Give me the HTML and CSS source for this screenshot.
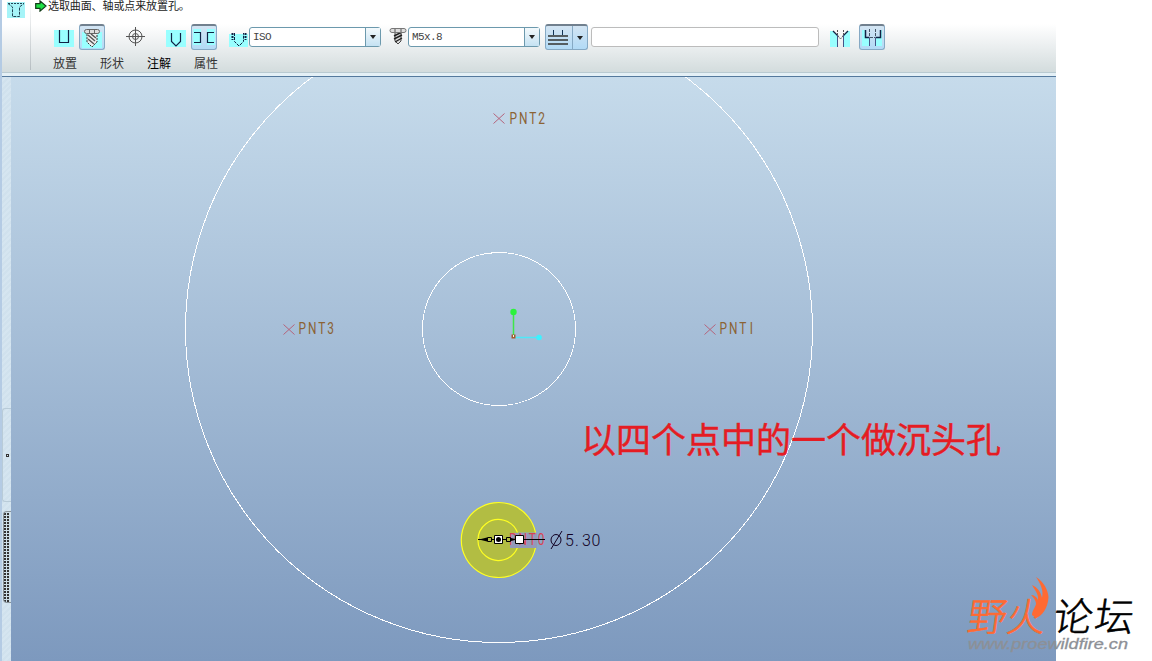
FILE: index.html
```
<!DOCTYPE html>
<html lang="zh-CN">
<head>
  <meta charset="UTF-8" />
  <meta name="viewport" content="width=device-width, initial-scale=1.0"/>
  <title>孔</title>
  <link rel="stylesheet" href="styles.css">
</head>
<body>

  <div class="app">
    <div class="toolbar">
      <div class="feature">
        <svg width="18" height="16" viewBox="0 0 18 16">
          <rect width="18" height="16" fill="#a6f4f8"/>
          <path d="M1 1.5H17" stroke="#245" stroke-dasharray="2 1"/>
          <path d="M1 1.5L5.500 5V14.500H12.500V5L17 1.500" fill="none" stroke="#245" stroke-dasharray="3 1"/>
        </svg>
      </div>
      <div class="main">
        <div class="message">
          <svg width="12" height="12" viewBox="0 0 12 12"><path d="M.7 3.700H5V.9L11 6L5 11.100V8.300H.7Z" fill="#1fe045" stroke="#123c18" stroke-width="1.200"/></svg>
          <span>选取曲面、轴或点来放置孔。</span>
        </div>
        <div class="tools">
          <svg class="icon simple" width="20" height="17" viewBox="0 0 20 17">
            <rect width="20" height="17" fill="#9ff"/>
            <path d="M5.500 0V12.500H14.500V0" fill="none" stroke="#124" stroke-width="1.200"/>
          </svg>
          <button class="pressed standard">
            <svg width="20" height="20" viewBox="0 0 20 20">
              <path d="M0 4H20V20H0Z" fill="#9ff"/>
              <path d="M5 5H15V14L10 19L5 14Z" fill="#eee" stroke="#333" stroke-dasharray="2 1"/>
              <path d="M6 7L13 13M6 11L12 16M9 6L14 10" stroke="#555" stroke-width="1.500"/>
              <rect x="2.500" y="1.500" width="15" height="4" rx="2" fill="#ddd" stroke="#666"/>
              <path d="M7.500 2V5M12.500 2V5" stroke="#666"/>
            </svg>
          </button>
          <svg class="icon target" width="20" height="20" viewBox="0 0 20 20" fill="none" stroke="#555">
            <circle cx="9.500" cy="9.500" r="6.500"/>
            <circle cx="9.500" cy="9.500" r="3"/>
            <path d="M0 9.500H19M9.500 0V19"/>
          </svg>
          <svg class="icon drill" width="20" height="17" viewBox="0 0 20 17">
            <rect width="20" height="17" fill="#9ff"/>
            <path d="M5.500 3V11.500L10 16L14.500 11.500V3" fill="none" stroke="#124" stroke-width="1.200"/>
          </svg>
          <button class="pressed clearance">
            <svg width="22" height="18" viewBox="0 0 22 18">
              <path d="M0 0H8V16H0ZM14 0H22V16H14Z" fill="#9ff"/>
              <path d="M1 3.500H7.500V13.500H1M21 3.500H14.500V13.500H21" fill="none" stroke="#124" stroke-width="1.200"/>
            </svg>
          </button>
          <svg class="icon thread" width="20" height="17" viewBox="0 0 20 17">
            <rect y="4" width="19" height="13" fill="#9ff"/>
            <path d="M5.500 3V11.500L10 16L14.500 11.500V3" fill="none" stroke="#124" stroke-dasharray="3 1"/>
            <path d="M3.500 3V10M16.500 3V10" stroke="#124" stroke-width="2" stroke-dasharray="2 1"/>
          </svg>
          <div class="combo"><span>ISO</span><i></i></div>
          <svg class="icon bolt" width="18" height="17" viewBox="0 0 18 17">
            <path d="M6 4H12V13L9 16L6 13Z" fill="#ddd" stroke="#444"/>
            <path d="M5 8L13 4M5 11L13 7M6 14L13 10" stroke="#222" stroke-width="1.400"/>
            <rect x="1" y=".5" width="16" height="4" rx="2" fill="#ddd" stroke="#777"/>
            <path d="M6 1V4M12 1V4" stroke="#555"/>
          </svg>
          <div class="combo size"><span>M5x.8</span><i></i></div>
          <button class="pressed split">
            <svg width="26" height="23" viewBox="0 0 26 23">
              <path d="M7.500 4V10M16.500 4V10" stroke="#135"/>
              <path d="M2 10H22M2 14H22M2 18H22" stroke="#555e62" stroke-width="2"/>
            </svg>
            <i></i>
          </button>
          <div class="depth"></div>
          <svg class="icon sink" width="20" height="17" viewBox="0 0 20 17">
            <path d="M0 1H3L8 6V17H0ZM20 1H17L13 6V17H20Z" fill="#9ff"/>
            <path d="M3 1L8 6M18 1L13 6" stroke="#124" stroke-width="1.300"/>
            <path d="M7.500 5V17M13.500 5V17" stroke="#458"/>
            <path d="M7.500 0V5M13.500 0V5M8 6L10.500 9L13 6" fill="none" stroke="#555" stroke-dasharray="2 1"/>
          </svg>
          <button class="pressed bore">
            <svg width="20" height="17" viewBox="0 0 20 17">
              <path d="M0 1H4V8H7V17H0ZM20 1H18V8H14V17H20Z" fill="#9ff"/>
              <path d="M3.500 1V8.500H7.500M18.500 1V8.500H13.500" fill="none" stroke="#124" stroke-width="1.500"/>
              <path d="M7.500 9V17M13.500 9V17" stroke="#458"/>
              <path d="M7.500 0V8M13.500 0V8M8 8.500H13" stroke="#456" stroke-dasharray="3 1"/>
            </svg>
          </button>
        </div>
        <div class="tabs">
          <span>放置</span>
          <span>形状</span>
          <span class="changed">注解</span>
          <span>属性</span>
        </div>
      </div>
    </div>

    <div class="work">
      <div class="dock">
        <div class="panel"><b></b></div>
        <div class="grip"></div>
      </div>
      <svg class="model" width="1045" height="584" viewBox="11 77 1045 584">
        <!-- outer and inner sketch circles -->
        <g fill="none" stroke="#fff" shape-rendering="crispEdges">
          <circle cx="499" cy="329" r="313.500"/>
          <circle cx="499" cy="329" r="76.500"/>
        </g>

        <!-- datum points -->
        <path class="point" d="M493.500 113.500l11 10m0-10l-11 10M283.500 324.500l11 10m0-10l-11 10M704.500 324.500l11 10m0-10l-11 10"/>
        <text class="tag" x="509.500" y="124">PNT2</text>
        <text class="tag" x="298.500" y="334">PNT3</text>
        <text class="tag" x="719.500" y="334">PNT<tspan dx="2">I</tspan></text>

        <!-- coordinate system -->
        <path d="M513.500 336V312" stroke="#3fe648" stroke-width="1.500"/>
        <path d="M514 337.500H539" stroke="#4ee8f8" stroke-width="1.500"/>
        <circle cx="513.500" cy="312" r="3.200" fill="#2cf33c"/>
        <circle cx="539" cy="337.500" r="2.800" fill="#3df2ff"/>
        <path d="M511.500 334.500h4v4h-4z" fill="#a65a32"/>
        <path d="M513 335h1v2h-1z" fill="#dfe"/>

        <!-- hole preview -->
        <path d="M535.500 532.500A37.500 37.500 0 1 0 535.500 547.500H518V532.500Z" fill="#b2bd43"/>
        <path d="M535.500 532.500A37.500 37.500 0 1 0 535.500 547.500" fill="none" stroke="#ff2" stroke-width="1.200"/>
        <path d="M517.500 532.500A20.500 20.500 0 1 0 517.500 547.500" fill="none" stroke="#ff2" stroke-width="1.200"/>
        <path d="M510 533H537V548H510Z" fill="#929ab9"/>
        <text class="tag active" x="509" y="545">PNT0</text>
        <path d="M478 539.500H545" stroke="#000" stroke-width="1.200"/>
        <path d="M479 539.500L487 537.500V541.500ZM517 539.500L509 537.500V541.500Z" fill="#000"/>
        <path d="M487.500 537.500h4v4h-4zM506.500 537.500h4v4h-4z" fill="#b2bd43" stroke="#000"/>
        <path d="M494.500 535.500h8v8h-8zM515.500 535.500h8v8h-8z" fill="#fff" stroke="#000"/>
        <circle cx="498.500" cy="539.500" r="2.500" fill="#000"/>
        <ellipse cx="556" cy="540" rx="5" ry="5.500" fill="none" stroke="#102"/>
        <path d="M551 549L562 531" stroke="#102"/>
        <text class="dim" x="565 575 582 591.500" y="546">5.30</text>

        <text class="note" x="581" y="452.500">以四个点中的一个做沉头孔</text>
      </svg>
    </div>
  </div>

  <svg class="logo" width="196" height="86" viewBox="956 575 196 86">
    <g transform="translate(968 631) skewX(-8)">
      <text class="brand fire" x="-2" y="0">野火</text>
      <text class="brand" x="84" y="0" textLength="80">论坛</text>
    </g>
    <path d="M1036 577C1044 582 1048 590 1048.500 597C1048 608 1042 616 1036 618L1032 615C1032 611 1035 608 1036 604C1036 600 1033 597 1031 595C1034 595 1037 597 1038 600C1039 594 1034 589 1032 585C1037 587 1041 592 1042 598C1044 590 1040 583 1036 577Z" fill="#ff6a32"/>
    <text class="url" x="968" y="649" textLength="160" lengthAdjust="spacingAndGlyphs">www.proewildfire.cn</text>
  </svg>

</body>
</html>
```
FILE: styles.css
```
body {
  margin: 0;
  background: #fff;
  font-family: "Liberation Sans", "Noto Sans CJK SC", sans-serif;
  overflow: hidden;
}

svg {
  display: block;
  flex: none;
}

.app {
  width: 1054px;
  height: 661px;
  border-left: 2px solid #b4cbe4;
  display: flex;
  flex-direction: column;
}

.toolbar {
  height: 77px;
  box-sizing: border-box;
  display: flex;
  background: linear-gradient(#fff 24px, #eef1f2 43px, #d3dcdd 72px, #b9cad1 72px, #b9cad1 73px, #e4f0f6 73px);
  border-bottom: 1px solid #54799d;
}

.feature {
  width: 29px;
  height: 70px;
  box-sizing: border-box;
  padding: 2px 0 0 5px;
  border-right: 1px solid;
  border-image: linear-gradient(#fff, #b4bcc0) 1;
}

.main {
  flex: 1;
}

.message {
  height: 14px;
  padding-left: 4px;
  display: flex;
  align-items: center;
  gap: 1px;
  font-size: 11px;
  letter-spacing: -0.1px;
  line-height: 14px;
  color: #222;
}

.message svg {
  margin-top: -3px;
}

.message span {
  margin-top: -2px;
}

.tools {
  display: flex;
  align-items: center;
  height: 26px;
  margin-top: 10px;
  padding-left: 23px;
}

.icon {
  margin-top: 2px;
}

.pressed {
  width: 26px;
  height: 26px;
  box-sizing: border-box;
  padding: 0;
  display: flex;
  align-items: center;
  justify-content: center;
  border: 1px solid #86a9c4;
  border-top: 2px solid #71808e;
  border-radius: 3px;
  background: linear-gradient(#d3e5f3, #b2daf6);
}

.standard {
  margin-left: 5px;
}

.target {
  margin: 0 0 0 21px;
}

.drill {
  margin-left: 20px;
}

.clearance {
  margin-left: 5px;
}

.thread {
  margin-left: 12px;
}

.combo {
  width: 132px;
  height: 20px;
  box-sizing: border-box;
  display: flex;
  border: 1px solid #6c99ad;
  border-radius: 3px;
  background: #fff;
  font-family: "Liberation Mono", monospace;
  font-size: 11px;
  letter-spacing: -0.6px;
  line-height: 19px;
  color: #444;
}

.combo span {
  flex: 1;
  padding-left: 3px;
}

.combo i {
  width: 14px;
  border-left: 1px solid #6c99ad;
  background: linear-gradient(#f3f9fc, #c5e2f3);
}

.combo i,
.split i {
  display: flex;
  align-items: center;
  justify-content: center;
}

.combo i::after,
.split i::after {
  content: "";
  border: 3px solid transparent;
  border-top: 4px solid #222;
  border-bottom: 0;
}

.bolt {
  margin: -2px 1px 0 8px;
}

.split {
  width: 43px;
  margin-left: 5px;
}

.split i {
  flex: 1;
  height: 23px;
  border-left: 1px solid #86a9c4;
}

.depth {
  width: 228px;
  height: 20px;
  box-sizing: border-box;
  margin-left: 3px;
  border: 1px solid #bcbcbc;
  border-radius: 3px;
  background: #fff;
}

.sink {
  margin-left: 11px;
}

.bore {
  margin-left: 9px;
}

.tabs {
  display: flex;
  gap: 23px;
  padding-left: 22px;
  margin-top: 5px;
  font-size: 12px;
  line-height: 18px;
  color: #333;
}

.tabs .changed {
  color: #000;
}

.work {
  flex: 1;
  display: flex;
}

.dock {
  width: 9px;
  box-sizing: border-box;
  padding-top: 331px;
  background: repeating-linear-gradient(135deg, #d0e1ed 0 2px, #d5e5f0 2px 4px);
}

.panel {
  height: 94px;
  box-sizing: border-box;
  border: 1px solid #b8cbd8;
  border-right: 0;
  border-radius: 3px 0 0 3px;
  display: flex;
  align-items: center;
  justify-content: center;
}

.panel b {
  width: 1px;
  height: 1px;
  border: 1px solid #333;
}

.grip {
  height: 92px;
  box-sizing: border-box;
  margin: 9px 0 0 1px;
  border: 1px solid #89939a;
  border-right: 0;
  border-radius: 4px 0 0 4px;
  background: radial-gradient(circle at 1px 1px, #333 0.8px, transparent 1px) 0 1px / 2.500px 3px repeat-y, radial-gradient(circle at 1px 1px, #333 0.8px, transparent 1px) 3px 1px / 3px 3px repeat-y, #cedfe9;
}

.model {
  background: linear-gradient(#c6dbeb, #7d99be);
}

.point {
  fill: none;
  stroke: #b5647c;
}

.tag {
  font-family: Roboto, sans-serif;
  font-size: 17px;
  letter-spacing: 2.800px;
  transform-box: fill-box;
  transform: scaleX(0.7);
  fill: #8b6334;
}

.active {
  fill: #d84352;
}

.dim {
  font-family: Roboto, sans-serif;
  font-size: 16px;
  font-weight: 300;
  fill: #102;
}

.note {
  font-family: "Noto Sans CJK SC", sans-serif;
  font-size: 35px;
  fill: #e51c23;
  stroke: #e51c23;
  stroke-width: 0.4px;
}

.logo {
  position: absolute;
  left: 956px;
  top: 575px;
}

.brand {
  font-family: "Noto Sans CJK SC", sans-serif;
  font-size: 39px;
  font-weight: 300;
  fill: #000;
  stroke: #000;
  stroke-width: 0.6px;
}

.fire {
  fill: #ff6a32;
  stroke: #ff6a32;
}

.url {
  font-family: "Liberation Sans", sans-serif;
  font-size: 14px;
  font-style: italic;
  fill: #8d9096;
  stroke: #8d9096;
  stroke-width: 0.3px;
}
```
